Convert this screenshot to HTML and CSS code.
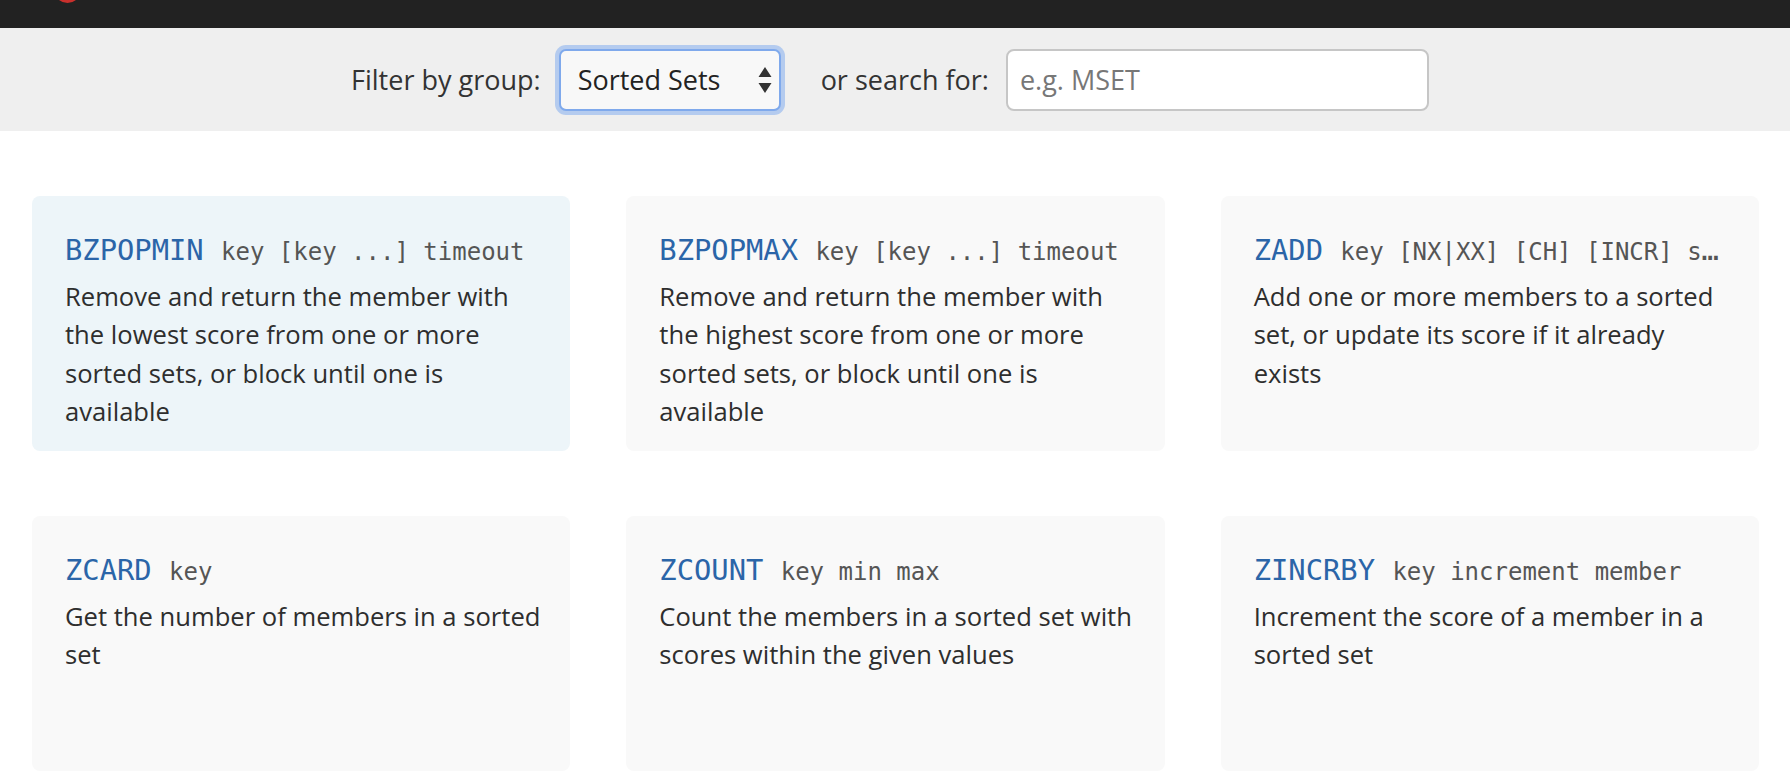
FILE: index.html
```html
<!DOCTYPE html>
<html lang="en">
<head>
<meta charset="utf-8">
<title>Commands</title>
<link rel="stylesheet" href="styles.css">
</head>
<body>
<header class="topbar">
  <div class="logo"></div>
</header>
<form class="filter-bar">
  <label class="filter-label" for="group">Filter by group:</label>
  <span class="select-wrap">
    <select id="group" class="group-select">
      <option>Sorted Sets</option>
    </select>
    <svg class="select-arrows" width="14" height="26" viewBox="0 0 14 26"><path d="M7 0 L13.5 10 L0.5 10 Z M7 26 L13.5 16 L0.5 16 Z" fill="#333"/></svg>
  </span>
  <label class="filter-label search-label" for="search">or search for:</label>
  <input id="search" class="search-input" type="text" placeholder="e.g. MSET">
</form>
<main class="commands">
  <a class="card card-active" href="#">
    <div class="title"><span class="name">BZPOPMIN</span> <span class="args">key [key ...] timeout</span></div>
    <p class="summary">Remove and return the member with the lowest score from one or more sorted sets, or block until one is available</p>
  </a>
  <a class="card" href="#">
    <div class="title"><span class="name">BZPOPMAX</span> <span class="args">key [key ...] timeout</span></div>
    <p class="summary">Remove and return the member with the highest score from one or more sorted sets, or block until one is available</p>
  </a>
  <a class="card" href="#">
    <div class="title"><span class="name">ZADD</span> <span class="args">key [NX|XX] [CH] [INCR] score member [score member ...]</span></div>
    <p class="summary">Add one or more members to a sorted set, or update its score if it already exists</p>
  </a>
  <a class="card" href="#">
    <div class="title"><span class="name">ZCARD</span> <span class="args">key</span></div>
    <p class="summary">Get the number of members in a sorted set</p>
  </a>
  <a class="card" href="#">
    <div class="title"><span class="name">ZCOUNT</span> <span class="args">key min max</span></div>
    <p class="summary">Count the members in a sorted set with scores within the given values</p>
  </a>
  <a class="card" href="#">
    <div class="title"><span class="name">ZINCRBY</span> <span class="args">key increment member</span></div>
    <p class="summary">Increment the score of a member in a sorted set</p>
  </a>
</main>
</body>
</html>
```
FILE: styles.css
```css
* { box-sizing: border-box; }

html, body {
  margin: 0;
  padding: 0;
  background: #ffffff;
}

body {
  font-family: "Open Sans", "Noto Sans", sans-serif;
  color: #333333;
}

.topbar {
  height: 28px;
  background: #222222;
  display: flex;
  overflow: hidden;
}

.logo {
  width: 27px;
  height: 27px;
  border-radius: 50%;
  background: #c9302c;
  margin-left: 54px;
  margin-top: -24px;
}

.filter-bar {
  height: 103px;
  margin: 0;
  background: #efefef;
  display: flex;
  align-items: center;
  justify-content: center;
  padding-right: 10px;
}

.filter-label {
  font-size: 27px;
  color: #333333;
  margin-right: 18px;
}

.search-label {
  margin-left: 40px;
  margin-right: 17px;
}

.select-wrap {
  position: relative;
  display: inline-block;
}

.group-select {
  -webkit-appearance: none;
  appearance: none;
  width: 222px;
  height: 62px;
  border: 2px solid #7fa9ec;
  border-radius: 7px;
  box-shadow: 0 0 0 4px rgba(140, 178, 238, 0.6);
  background: #f8f8f8;
  font-family: "Open Sans", "Noto Sans", sans-serif;
  font-size: 27px;
  color: #222222;
  padding: 0 0 0 17px;
  outline: none;
  display: block;
}

.select-arrows {
  position: absolute;
  right: 9px;
  top: 18px;
  pointer-events: none;
}

.search-input {
  width: 423px;
  height: 62px;
  border: 2px solid #c6c6c6;
  border-radius: 8px;
  background: #ffffff;
  font-family: "Open Sans", "Noto Sans", sans-serif;
  font-size: 27px;
  color: #333333;
  padding: 0 12px;
  outline: none;
}

.search-input::placeholder {
  color: #777777;
}

.commands {
  display: grid;
  grid-template-columns: repeat(3, 1fr);
  grid-auto-rows: 255px;
  column-gap: 56px;
  row-gap: 65px;
  padding: 65px 31px 40px 32px;
}

.card {
  display: block;
  background: #f9f9f9;
  border-radius: 8px;
  padding: 34px 26px 20px 33px;
  text-decoration: none;
  color: #333333;
  min-width: 0;
}

.card-active {
  background: #edf5f9;
}

.title {
  font-family: "DejaVu Sans Mono", "Liberation Mono", monospace;
  font-size: 28.8px;
  line-height: 40px;
  white-space: nowrap;
  overflow: hidden;
  text-overflow: ellipsis;
  color: #555555;
  padding-right: 7px;
}

.name {
  color: #2b65a8;
}

.args {
  font-size: 24px;
  line-height: 1;
  color: #555555;
}

.summary {
  margin: 8px 0 0 0;
  font-size: 25.6px;
  line-height: 38.4px;
  color: #2e2e2e;
}
```
